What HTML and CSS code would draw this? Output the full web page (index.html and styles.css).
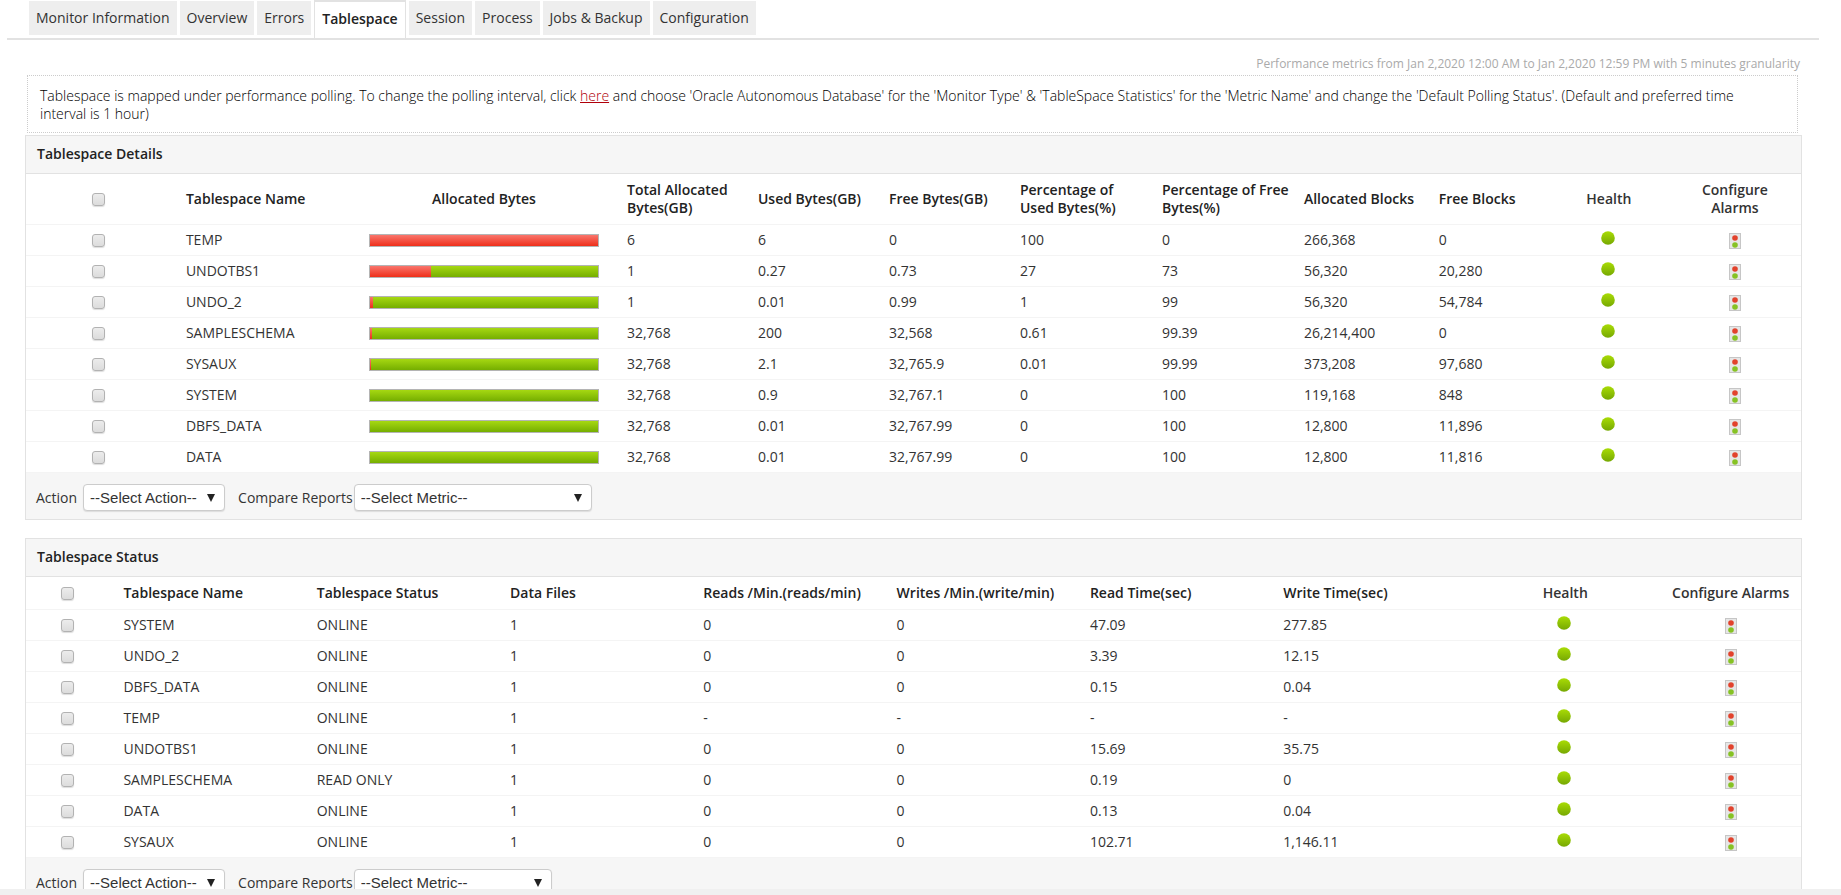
FILE: index.html
```
<!DOCTYPE html>
<html lang="en">
<head>
<meta charset="utf-8">
<title>Tablespace</title>
<link rel="stylesheet" href="styles.css">
</head>
<body>
<svg class="defs" aria-hidden="true">
  <defs>
    <linearGradient id="green" x1="0" y1="0" x2="0" y2="1"><stop offset="0" stop-color="#a9dc05"/><stop offset="1" stop-color="#76a803"/></linearGradient>
    <symbol id="dot" viewBox="0 0 14 14"><circle cx="7" cy="7" r="6.8" fill="url(#green)"/></symbol>
    <symbol id="light" viewBox="0 0 12 16">
      <rect x=".5" y=".5" width="11" height="15" fill="#e6e6e6" stroke="#c6c6c6"/>
      <circle cx="6" cy="5" r="2.8" fill="#e2422c"/><circle cx="6" cy="12" r="2.8" fill="#86c224"/>
    </symbol>
  </defs>
</svg>
<main class="page">
  <nav class="tabs">
    <a class="tab" href="#">Monitor Information</a>
    <a class="tab" href="#">Overview</a>
    <a class="tab" href="#">Errors</a>
    <a class="tab tab-active" href="#" aria-current="page">Tablespace</a>
    <a class="tab" href="#">Session</a>
    <a class="tab" href="#">Process</a>
    <a class="tab" href="#">Jobs &amp; Backup</a>
    <a class="tab" href="#">Configuration</a>
  </nav>
  <div class="content">
    <p class="period">Performance metrics from Jan 2,2020 12:00 AM to Jan 2,2020 12:59 PM with 5 minutes granularity</p>
    <p class="notice">Tablespace is mapped under performance polling. To change the polling interval, click <a href="#">here</a> and choose 'Oracle Autonomous Database' for the 'Monitor Type' &amp; 'TableSpace Statistics' for the 'Metric Name' and change the 'Default Polling Status'. (Default and preferred time interval is 1 hour)</p>

    <section class="panel">
      <h2 class="panel-title">Tablespace Details</h2>
      <table class="grid details">
        <colgroup><col class="d-check"><col class="d-name"><col class="d-bar"><col class="d-bytes"><col class="d-bytes"><col class="d-bytes"><col class="d-pct"><col class="d-pct"><col class="d-blocks"><col class="d-free"><col class="d-health"><col class="d-alarm"></colgroup>
        <thead>
          <tr><th class="mid"><input type="checkbox" aria-label="Select all"></th><th>Tablespace Name</th><th class="mid">Allocated Bytes</th><th>Total Allocated Bytes(GB)</th><th>Used Bytes(GB)</th><th>Free Bytes(GB)</th><th>Percentage of Used Bytes(%)</th><th>Percentage of Free Bytes(%)</th><th>Allocated Blocks</th><th>Free Blocks</th><th class="mid soft">Health</th><th class="mid soft">Configure Alarms</th></tr>
        </thead>
        <tbody>
          <tr><td class="mid"><input type="checkbox" aria-label="TEMP"></td><td>TEMP</td><td class="mid"><div class="bar"><div class="used" style="width:100%"></div></div></td><td>6</td><td>6</td><td>0</td><td>100</td><td>0</td><td>266,368</td><td>0</td><td class="mid"><svg class="dot"><use href="#dot"/></svg></td><td class="mid"><svg class="light"><use href="#light"/></svg></td></tr>
          <tr><td class="mid"><input type="checkbox" aria-label="UNDOTBS1"></td><td>UNDOTBS1</td><td class="mid"><div class="bar"><div class="used" style="width:27%"></div></div></td><td>1</td><td>0.27</td><td>0.73</td><td>27</td><td>73</td><td>56,320</td><td>20,280</td><td class="mid"><svg class="dot"><use href="#dot"/></svg></td><td class="mid"><svg class="light"><use href="#light"/></svg></td></tr>
          <tr><td class="mid"><input type="checkbox" aria-label="UNDO_2"></td><td>UNDO_2</td><td class="mid"><div class="bar"><div class="used" style="width:1.4%"></div></div></td><td>1</td><td>0.01</td><td>0.99</td><td>1</td><td>99</td><td>56,320</td><td>54,784</td><td class="mid"><svg class="dot"><use href="#dot"/></svg></td><td class="mid"><svg class="light"><use href="#light"/></svg></td></tr>
          <tr><td class="mid"><input type="checkbox" aria-label="SAMPLESCHEMA"></td><td>SAMPLESCHEMA</td><td class="mid"><div class="bar"><div class="used" style="width:0.9%"></div></div></td><td>32,768</td><td>200</td><td>32,568</td><td>0.61</td><td>99.39</td><td>26,214,400</td><td>0</td><td class="mid"><svg class="dot"><use href="#dot"/></svg></td><td class="mid"><svg class="light"><use href="#light"/></svg></td></tr>
          <tr><td class="mid"><input type="checkbox" aria-label="SYSAUX"></td><td>SYSAUX</td><td class="mid"><div class="bar"><div class="used" style="width:0.45%"></div></div></td><td>32,768</td><td>2.1</td><td>32,765.9</td><td>0.01</td><td>99.99</td><td>373,208</td><td>97,680</td><td class="mid"><svg class="dot"><use href="#dot"/></svg></td><td class="mid"><svg class="light"><use href="#light"/></svg></td></tr>
          <tr><td class="mid"><input type="checkbox" aria-label="SYSTEM"></td><td>SYSTEM</td><td class="mid"><div class="bar"><div class="used" style="width:0%"></div></div></td><td>32,768</td><td>0.9</td><td>32,767.1</td><td>0</td><td>100</td><td>119,168</td><td>848</td><td class="mid"><svg class="dot"><use href="#dot"/></svg></td><td class="mid"><svg class="light"><use href="#light"/></svg></td></tr>
          <tr><td class="mid"><input type="checkbox" aria-label="DBFS_DATA"></td><td>DBFS_DATA</td><td class="mid"><div class="bar"><div class="used" style="width:0%"></div></div></td><td>32,768</td><td>0.01</td><td>32,767.99</td><td>0</td><td>100</td><td>12,800</td><td>11,896</td><td class="mid"><svg class="dot"><use href="#dot"/></svg></td><td class="mid"><svg class="light"><use href="#light"/></svg></td></tr>
          <tr><td class="mid"><input type="checkbox" aria-label="DATA"></td><td>DATA</td><td class="mid"><div class="bar"><div class="used" style="width:0%"></div></div></td><td>32,768</td><td>0.01</td><td>32,767.99</td><td>0</td><td>100</td><td>12,800</td><td>11,816</td><td class="mid"><svg class="dot"><use href="#dot"/></svg></td><td class="mid"><svg class="light"><use href="#light"/></svg></td></tr>
        </tbody>
      </table>
      <div class="panel-actions">
        <label for="action1">Action</label>
        <select id="action1" class="select-action"><option>--Select Action--</option></select>
        <label for="metric1" class="compare">Compare Reports</label>
        <select id="metric1" class="select-metric-wide"><option>--Select Metric--</option></select>
      </div>
    </section>

    <section class="panel">
      <h2 class="panel-title">Tablespace Status</h2>
      <table class="grid status">
        <colgroup><col class="s-check"><col class="s-col"><col class="s-col"><col class="s-col"><col class="s-col"><col class="s-col"><col class="s-col"><col class="s-write"><col class="s-health"><col class="s-alarm"></colgroup>
        <thead>
          <tr><th class="mid"><input type="checkbox" aria-label="Select all"></th><th>Tablespace Name</th><th>Tablespace Status</th><th>Data Files</th><th>Reads /Min.(reads/min)</th><th>Writes /Min.(write/min)</th><th>Read Time(sec)</th><th>Write Time(sec)</th><th class="mid soft">Health</th><th class="mid soft">Configure Alarms</th></tr>
        </thead>
        <tbody>
          <tr><td class="mid"><input type="checkbox" aria-label="SYSTEM"></td><td>SYSTEM</td><td>ONLINE</td><td>1</td><td>0</td><td>0</td><td>47.09</td><td>277.85</td><td class="mid"><svg class="dot"><use href="#dot"/></svg></td><td class="mid"><svg class="light"><use href="#light"/></svg></td></tr>
          <tr><td class="mid"><input type="checkbox" aria-label="UNDO_2"></td><td>UNDO_2</td><td>ONLINE</td><td>1</td><td>0</td><td>0</td><td>3.39</td><td>12.15</td><td class="mid"><svg class="dot"><use href="#dot"/></svg></td><td class="mid"><svg class="light"><use href="#light"/></svg></td></tr>
          <tr><td class="mid"><input type="checkbox" aria-label="DBFS_DATA"></td><td>DBFS_DATA</td><td>ONLINE</td><td>1</td><td>0</td><td>0</td><td>0.15</td><td>0.04</td><td class="mid"><svg class="dot"><use href="#dot"/></svg></td><td class="mid"><svg class="light"><use href="#light"/></svg></td></tr>
          <tr><td class="mid"><input type="checkbox" aria-label="TEMP"></td><td>TEMP</td><td>ONLINE</td><td>1</td><td>-</td><td>-</td><td>-</td><td>-</td><td class="mid"><svg class="dot"><use href="#dot"/></svg></td><td class="mid"><svg class="light"><use href="#light"/></svg></td></tr>
          <tr><td class="mid"><input type="checkbox" aria-label="UNDOTBS1"></td><td>UNDOTBS1</td><td>ONLINE</td><td>1</td><td>0</td><td>0</td><td>15.69</td><td>35.75</td><td class="mid"><svg class="dot"><use href="#dot"/></svg></td><td class="mid"><svg class="light"><use href="#light"/></svg></td></tr>
          <tr><td class="mid"><input type="checkbox" aria-label="SAMPLESCHEMA"></td><td>SAMPLESCHEMA</td><td>READ ONLY</td><td>1</td><td>0</td><td>0</td><td>0.19</td><td>0</td><td class="mid"><svg class="dot"><use href="#dot"/></svg></td><td class="mid"><svg class="light"><use href="#light"/></svg></td></tr>
          <tr><td class="mid"><input type="checkbox" aria-label="DATA"></td><td>DATA</td><td>ONLINE</td><td>1</td><td>0</td><td>0</td><td>0.13</td><td>0.04</td><td class="mid"><svg class="dot"><use href="#dot"/></svg></td><td class="mid"><svg class="light"><use href="#light"/></svg></td></tr>
          <tr><td class="mid"><input type="checkbox" aria-label="SYSAUX"></td><td>SYSAUX</td><td>ONLINE</td><td>1</td><td>0</td><td>0</td><td>102.71</td><td>1,146.11</td><td class="mid"><svg class="dot"><use href="#dot"/></svg></td><td class="mid"><svg class="light"><use href="#light"/></svg></td></tr>
        </tbody>
      </table>
      <div class="panel-actions">
        <label for="action2">Action</label>
        <select id="action2" class="select-action"><option>--Select Action--</option></select>
        <label for="metric2" class="compare">Compare Reports</label>
        <select id="metric2" class="select-metric"><option>--Select Metric--</option></select>
      </div>
    </section>
  </div>
</main>
<div class="bottom-strip"></div>
</body>
</html>
```
FILE: styles.css
```
* { box-sizing: border-box; }

body {
  margin: 0;
  height: 100vh;
  display: flex;
  flex-direction: column;
  overflow: hidden;
  background: #fff;
  color: #333;
  font: 14px/18px "Open Sans", sans-serif;
}

.defs { position: absolute; width: 0; height: 0; }

.page { flex: 1; min-height: 0; overflow: hidden; }
.bottom-strip { flex: none; height: 6px; background: #f0f0f0; }

.tabs {
  display: flex;
  align-items: flex-start;
  gap: 3px;
  height: 40px;
  margin: 0 22px 0 7px;
  padding: 0 22px;
  border-bottom: 2px solid #e2e2e2;
}
.tab {
  height: 34px;
  margin-top: 1px;
  padding: 8px 7px;
  background: #eee;
  color: #333;
  text-decoration: none;
  white-space: nowrap;
}
.tab-active {
  height: 38px;
  margin-top: 0;
  padding: 8px 7px;
  background: #fff;
  border: 1px solid #e2e2e2;
  border-top-width: 2px;
  border-bottom: 0;
  color: #222;
  font-weight: 600;
}

.content { padding: 15px 39px 0 25px; }

.period {
  margin: 0;
  padding-right: 2px;
  font-size: 12px;
  color: #aaa;
  text-align: right;
}
.notice {
  margin: 2px 4px 2px 2px;
  padding: 11px 48px 11px 12px;
  height: 58px;
  border: 1px dotted #ccc;
  color: #000;
  font-weight: 300;
}
.notice a { color: #b0000a; }

.panel { margin-bottom: 18px; border: 1px solid #e2e2e2; }
.panel-title {
  margin: 0;
  padding: 9px 11px 10px;
  background: #f6f6f6;
  border-bottom: 1px solid #e2e2e2;
  color: #222;
  font-size: 14px;
  line-height: 18px;
  font-weight: 600;
}

.grid { width: 100%; table-layout: fixed; border-collapse: separate; border-spacing: 0; }
.grid th, .grid td {
  padding: 0 0 0 14px;
  border-bottom: 1px solid #f4f4f4;
  text-align: left;
  vertical-align: middle;
}
.grid td { height: 31px; }
.grid th { color: #222; font-weight: 600; }
.details th { height: 51px; }
.status th { height: 33px; }
.grid .mid { padding: 0 14px; text-align: center; }
.status .mid { padding: 0; }
.grid .soft { color: #333; }

.d-check { width: 8.22%; }
.d-name { width: 10.31%; }
.d-bar { width: 14.54%; }
.d-bytes { width: 7.38%; }
.d-pct { width: 8%; }
.d-blocks { width: 7.6%; }
.d-free { width: 6.99%; }
.d-health { width: 6.76%; }
.d-alarm { width: 7.44%; }

.s-check { width: 4.7%; }
.s-col { width: 10.89%; }
.s-write { width: 11.33%; }
.s-health { width: 10.7%; }
.s-alarm { width: 7.93%; }

input[type="checkbox"] {
  appearance: none;
  display: block;
  width: 13px;
  height: 13px;
  margin: 0 auto;
  border: 1px solid #b2b2b2;
  border-radius: 3px;
  background: linear-gradient(#ececec, #dcdcdc);
  box-shadow: 0 1px 1px #ddd;
}

.bar {
  height: 13px;
  border: 1px solid #b4b4b4;
  background: linear-gradient(#a6d812, #75ae00);
}
.used { height: 100%; background: linear-gradient(#f9756c, #ee2f1a); }

.dot, .light { display: block; margin: 0 auto; }
.dot { width: 16px; height: 18px; padding: 0 2px 4px 0; }
.light { width: 12px; height: 16px; margin-top: 2px; }

.panel-actions {
  display: flex;
  align-items: center;
  padding: 11px 10px 8px;
  background: #f6f6f6;
}
.compare { margin-left: 13px; }
select {
  appearance: none;
  height: 27px;
  padding: 0 6px 1px;
  border: 1px solid #ccc;
  border-radius: 4px;
  background: #fff url("data:image/svg+xml,%3Csvg xmlns='http://www.w3.org/2000/svg' width='8' height='8'%3E%3Cpath d='M0 0h8L4 8z' fill='%23222'/%3E%3C/svg%3E") no-repeat right 9px center;
  box-shadow: 0 1px 1px #ddd;
  color: #333;
  font: 15px "Liberation Sans", sans-serif;
}
.select-action { width: 142px; margin-left: 6px; }
.select-metric-wide { width: 238px; margin-left: 1px; }
.select-metric { width: 198px; margin-left: 1px; }
```
